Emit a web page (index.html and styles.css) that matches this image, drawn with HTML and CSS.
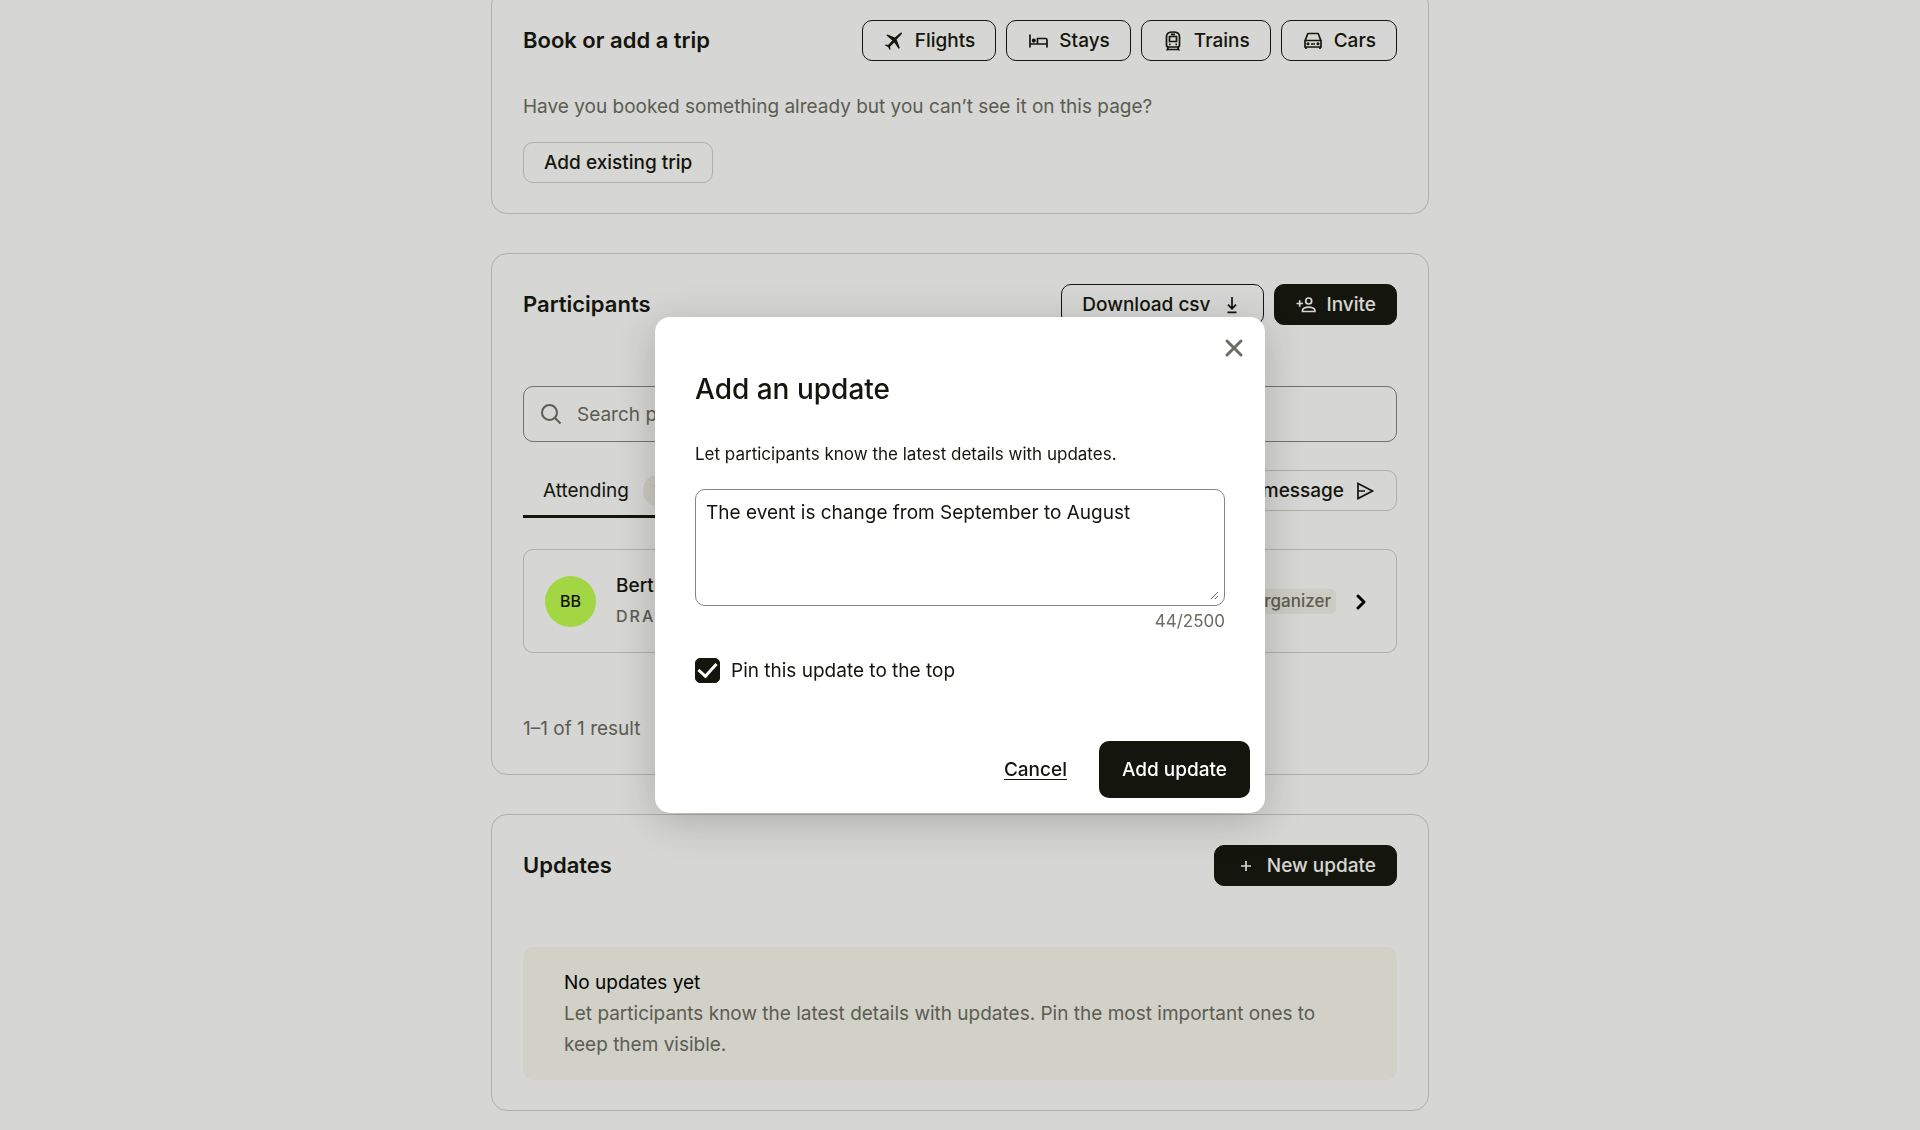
FILE: index.html
```html
<!DOCTYPE html>
<html lang="en">
<head>
  <meta charset="UTF-8">
  <meta name="viewport" content="width=device-width, initial-scale=1.0">
  <title>Event</title>
  <link rel="stylesheet" href="styles.css">
</head>
<body>
  <main class="page">
    <section class="card">
      <div class="card-header">
        <h2 class="card-title">Book or add a trip</h2>
        <div class="actions">
          <button class="btn" type="button">
            <svg class="icon" viewBox="0 0 22 22"><path d="M3.300 5.300l1.200-.8 7.300 2.900L17.200 3q1.500-.9 1.800-.4.300.6-.7 1.800l-4.700 5.200 3.200 8.200-1 1.200-4.500-6.500-4.300 4.200.500 2.600-.7.700-1.800-3.100-3.200-1.700.7-.7 2.600.400L9.300 10.600z"/></svg>
            Flights
          </button>
          <button class="btn" type="button">
            <svg class="icon line" viewBox="0 0 22 22"><path d="M3 4.500v13M3 14h17M20 17.500v-7.500q0-1.500-1.500-1.500h-8V14"/><circle cx="6.800" cy="10.600" r="1.200" fill="currentColor"/></svg>
            Stays
          </button>
          <button class="btn" type="button">
            <svg class="icon line" viewBox="0 0 22 22"><path d="M4.500 6.500Q4.500 2 11 2t6.500 4.500v8.500a2 2 0 0 1-2 2h-9a2 2 0 0 1-2-2zM7.500 6.500h7v5h-7zM9 4.300h4M6.500 17L4.800 20.500M15.500 17l1.700 3.500M6 19.500h10"/><path d="M7 14.300h1.500M13.500 14.300h1.500"/></svg>
            Trains
          </button>
          <button class="btn" type="button">
            <svg class="icon line" viewBox="0 0 22 22"><path d="M3 10.500h16v6.500H3zM3.200 10.500L5.500 4.200Q5.700 3.500 6.500 3.500h9q.8 0 1 .7l2.300 6.300M4 17v2M18 17v2M9 14h4"/><circle cx="6" cy="13.700" r=".7"/><circle cx="16" cy="13.700" r=".7"/></svg>
            Cars
          </button>
        </div>
      </div>
      <p class="card-text">Have you booked something already but you can’t see it on this page?</p>
      <button class="btn btn-light" type="button">Add existing trip</button>
    </section>

    <section class="card">
      <div class="card-header">
        <h2 class="card-title">Participants</h2>
        <div class="actions">
          <button class="btn" type="button">
            Download csv
            <svg class="icon line" viewBox="0 0 22 22"><path d="M11 3v11.500M7 10.700l4 4 4-4M6.500 18.300h9"/></svg>
          </button>
          <button class="btn btn-dark" type="button">
            <svg class="icon line" viewBox="0 0 22 22"><path d="M1.500 9.500h6.500M4.700 6.200v6.600"/><circle cx="13.700" cy="7" r="3"/><path d="M7.500 17.500v-1.300c0-1.800 3.200-3 6.200-3s6.200 1.200 6.200 3v1.300z"/></svg>
            Invite
          </button>
        </div>
      </div>

      <div class="search">
        <svg class="search-icon" viewBox="0 0 24 24"><circle cx="10.500" cy="10.500" r="7.500"/><path d="M16 16l5.500 5.500"/></svg>
        <input class="search-input" type="search" placeholder="Search participants" aria-label="Search participants">
      </div>

      <div class="tabs">
        <button class="tab" type="button">Attending <span class="count">1</span></button>
        <button class="btn btn-light" type="button">
          Send a message
          <svg class="icon line" viewBox="0 0 22 22"><path d="M4 3.500L18.500 11 4 18.500zM4 11h7"/></svg>
        </button>
      </div>

      <a class="person" href="#">
        <span class="avatar">BB</span>
        <span class="person-info">
          <span class="person-name">Bertrand</span>
          <span class="person-status">DRAFT</span>
        </span>
        <span class="role">Organizer</span>
        <svg class="chevron" viewBox="0 0 14 18"><path d="M4 4l6 6-6 6"/></svg>
      </a>

      <p class="results">1–1 of 1 result</p>
    </section>

    <section class="card">
      <div class="card-header">
        <h2 class="card-title">Updates</h2>
        <div class="actions">
          <button class="btn btn-dark" type="button">
            <svg class="icon line" viewBox="0 0 22 22"><path d="M11 6v10M6 11h10"/></svg>
            New update
          </button>
        </div>
      </div>
      <div class="empty">
        <p class="empty-title">No updates yet</p>
        <p class="empty-text">Let participants know the latest details with updates. Pin the most important ones to keep them visible.</p>
      </div>
    </section>
  </main>

  <div class="overlay">
    <form class="modal" role="dialog" aria-modal="true" aria-labelledby="modal-title">
      <button class="close" type="button" aria-label="Close">
        <svg class="close-icon" viewBox="0 0 20 20"><path d="M3 3l14 14M17 3L3 17"/></svg>
      </button>
      <div class="modal-body">
        <h1 class="modal-title" id="modal-title">Add an update</h1>
        <label class="modal-label" for="update">Let participants know the latest details with updates.</label>
        <div class="field">
          <textarea class="textarea" id="update" maxlength="2500">The event is change from September to August</textarea>
        </div>
        <p class="counter" id="counter">44/2500</p>
        <label class="pin">
          <input class="checkbox" type="checkbox" checked>
          Pin this update to the top
        </label>
      </div>
      <div class="modal-footer">
        <a class="cancel" href="#">Cancel</a>
        <button class="submit" type="button">Add update</button>
      </div>
    </form>
  </div>

  <script>
    const update = document.getElementById('update');
    const counter = document.getElementById('counter');

    update.addEventListener('input', () => {
      counter.textContent = update.value.length + '/2500';
    });
  </script>
</body>
</html>
```
FILE: styles.css
```css
* {
  box-sizing: border-box;
}

body {
  margin: 0;
  background: #fff;
  color: #14150d;
  font-family: Inter, "Liberation Sans", sans-serif;
  font-size: 19px;
  line-height: 31px;
}

h1, h2, p {
  margin: 0;
}

button, input, textarea {
  font: inherit;
  color: inherit;
}

button {
  cursor: pointer;
}

.page {
  max-width: 938px;
  margin: -11px auto 0;
  padding-bottom: 19px;
  display: flex;
  flex-direction: column;
  gap: 39px;
}

.card {
  padding: 30px 31px;
  border: 1px solid #d0d1c4;
  border-radius: 16px;
}

.card-header {
  display: flex;
  align-items: center;
  justify-content: space-between;
}

.card-title {
  font-size: 22px;
  font-weight: 600;
}

.actions {
  display: flex;
  gap: 10px;
}

.btn {
  display: inline-flex;
  align-items: center;
  gap: 10px;
  height: 41px;
  padding: 0 20px;
  border: 1px solid #14150d;
  border-radius: 10px;
  background: none;
  font-weight: 500;
}

.btn-light {
  border-color: #d0d1c4;
}

.btn-dark {
  background: #14150d;
  color: #fff;
}

.icon {
  width: 22px;
  height: 22px;
  fill: currentColor;
}

.line {
  fill: none;
  stroke: currentColor;
  stroke-width: 1.7;
}

.card-text {
  margin: 30px 0 20px;
  color: #6b6c62;
}

/* participants */
.search {
  display: flex;
  align-items: center;
  gap: 14px;
  height: 56px;
  margin-top: 61px;
  padding: 0 15px;
  border: 1px solid #85867b;
  border-radius: 10px;
}

.search-icon {
  width: 24px;
  height: 24px;
  fill: none;
  stroke: #6b6c62;
  stroke-width: 2;
}

.search-input {
  flex: 1;
  padding: 0;
  border: none;
  outline: none;
  background: none;
}

.search-input::placeholder {
  color: #6b6c62;
  opacity: 1;
}

.tabs {
  display: flex;
  align-items: flex-start;
  justify-content: space-between;
  margin-top: 28px;
}

.tab {
  display: flex;
  align-items: center;
  gap: 14px;
  height: 48px;
  padding: 0 20px 4px;
  border: none;
  border-bottom: 3px solid #14150d;
  background: none;
}

.count {
  padding: 0 11px;
  border-radius: 16px;
  background: #f1f1ea;
  color: #6b6c62;
  font-size: 17px;
}

.person {
  display: flex;
  align-items: center;
  height: 104px;
  margin-top: 31px;
  padding: 0 28px 0 21px;
  border: 1px solid #d0d1c4;
  border-radius: 10px;
  color: #14150d;
  text-decoration: none;
}

.avatar {
  width: 51px;
  height: 51px;
  border-radius: 50%;
  background: #c0ff50;
  font-size: 16px;
  font-weight: 500;
  line-height: 51px;
  text-align: center;
}

.person-info {
  display: flex;
  flex-direction: column;
  flex: 1;
  margin-left: 20px;
}

.person-name {
  font-weight: 500;
}

.person-status {
  color: #6b6c62;
  font-size: 16px;
  font-weight: 500;
  letter-spacing: 2px;
}

.role {
  padding: 0 5px;
  border-radius: 6px;
  background: #f3f3ec;
  color: #6b6c62;
  font-size: 17px;
  font-weight: 500;
  line-height: 25px;
}

.chevron {
  width: 14px;
  height: 18px;
  margin-left: 18px;
  fill: none;
  stroke: #000;
  stroke-width: 3;
  stroke-linecap: round;
  stroke-linejoin: round;
}

.results {
  margin-top: 60px;
  color: #6b6c62;
}

/* updates */
.empty {
  margin-top: 61px;
  padding: 20px 41px;
  border-radius: 10px;
  background: #f9f9f1;
}

.empty-title {
  color: #000;
}

.empty-text {
  color: #6b6c62;
}

/* modal */
.overlay {
  position: fixed;
  inset: 0;
  display: flex;
  align-items: center;
  justify-content: center;
  background: rgba(20, 21, 13, 0.175);
}

.modal {
  position: relative;
  width: 610px;
  max-width: 100%;
  border-radius: 15px;
  background: #fff;
  box-shadow: 0 8px 40px rgba(0, 0, 0, 0.2);
}

.close {
  position: absolute;
  top: 15px;
  right: 16px;
  display: flex;
  align-items: center;
  justify-content: center;
  width: 31px;
  height: 31px;
  padding: 0;
  border: none;
  background: none;
}

.close-icon {
  width: 20px;
  height: 20px;
  fill: none;
  stroke: #6b6c62;
  stroke-width: 3;
  stroke-linecap: round;
}

.modal-body {
  padding: 52px 40px 0;
}

.modal-title {
  font-size: 28px;
  font-weight: 500;
  line-height: 40px;
}

.modal-label {
  display: block;
  margin: 30px 0 19px;
  font-size: 17px;
}

.field {
  padding: 0 5px 5px 0;
  border: 1px solid #85867b;
  border-radius: 10px;
}

.textarea {
  display: block;
  width: 100%;
  height: 110px;
  padding: 7px 10px;
  border: none;
  border-radius: 10px;
  outline: none;
  background: none;
  resize: vertical;
}

.counter {
  color: #6b6c62;
  font-size: 17px;
  text-align: right;
}

.pin {
  display: flex;
  align-items: center;
  gap: 11px;
  margin-top: 18px;
}

.checkbox {
  appearance: none;
  display: flex;
  justify-content: center;
  width: 25px;
  height: 25px;
  margin: 0;
  border: 1px solid #14150d;
  border-radius: 5px;
}

.checkbox:checked {
  background: #14150d;
}

.checkbox:checked::before {
  content: "";
  width: 8px;
  height: 15px;
  border: solid #fff;
  border-width: 0 3px 3px 0;
  transform: rotate(42deg);
}

.modal-footer {
  display: flex;
  align-items: center;
  justify-content: flex-end;
  gap: 32px;
  padding: 55px 15px 15px;
}

.cancel {
  color: #14150d;
  font-weight: 500;
  text-underline-offset: 3px;
}

.submit {
  height: 57px;
  padding: 0 23px;
  border: none;
  border-radius: 10px;
  background: #14150d;
  color: #fff;
  font-weight: 500;
}
```
